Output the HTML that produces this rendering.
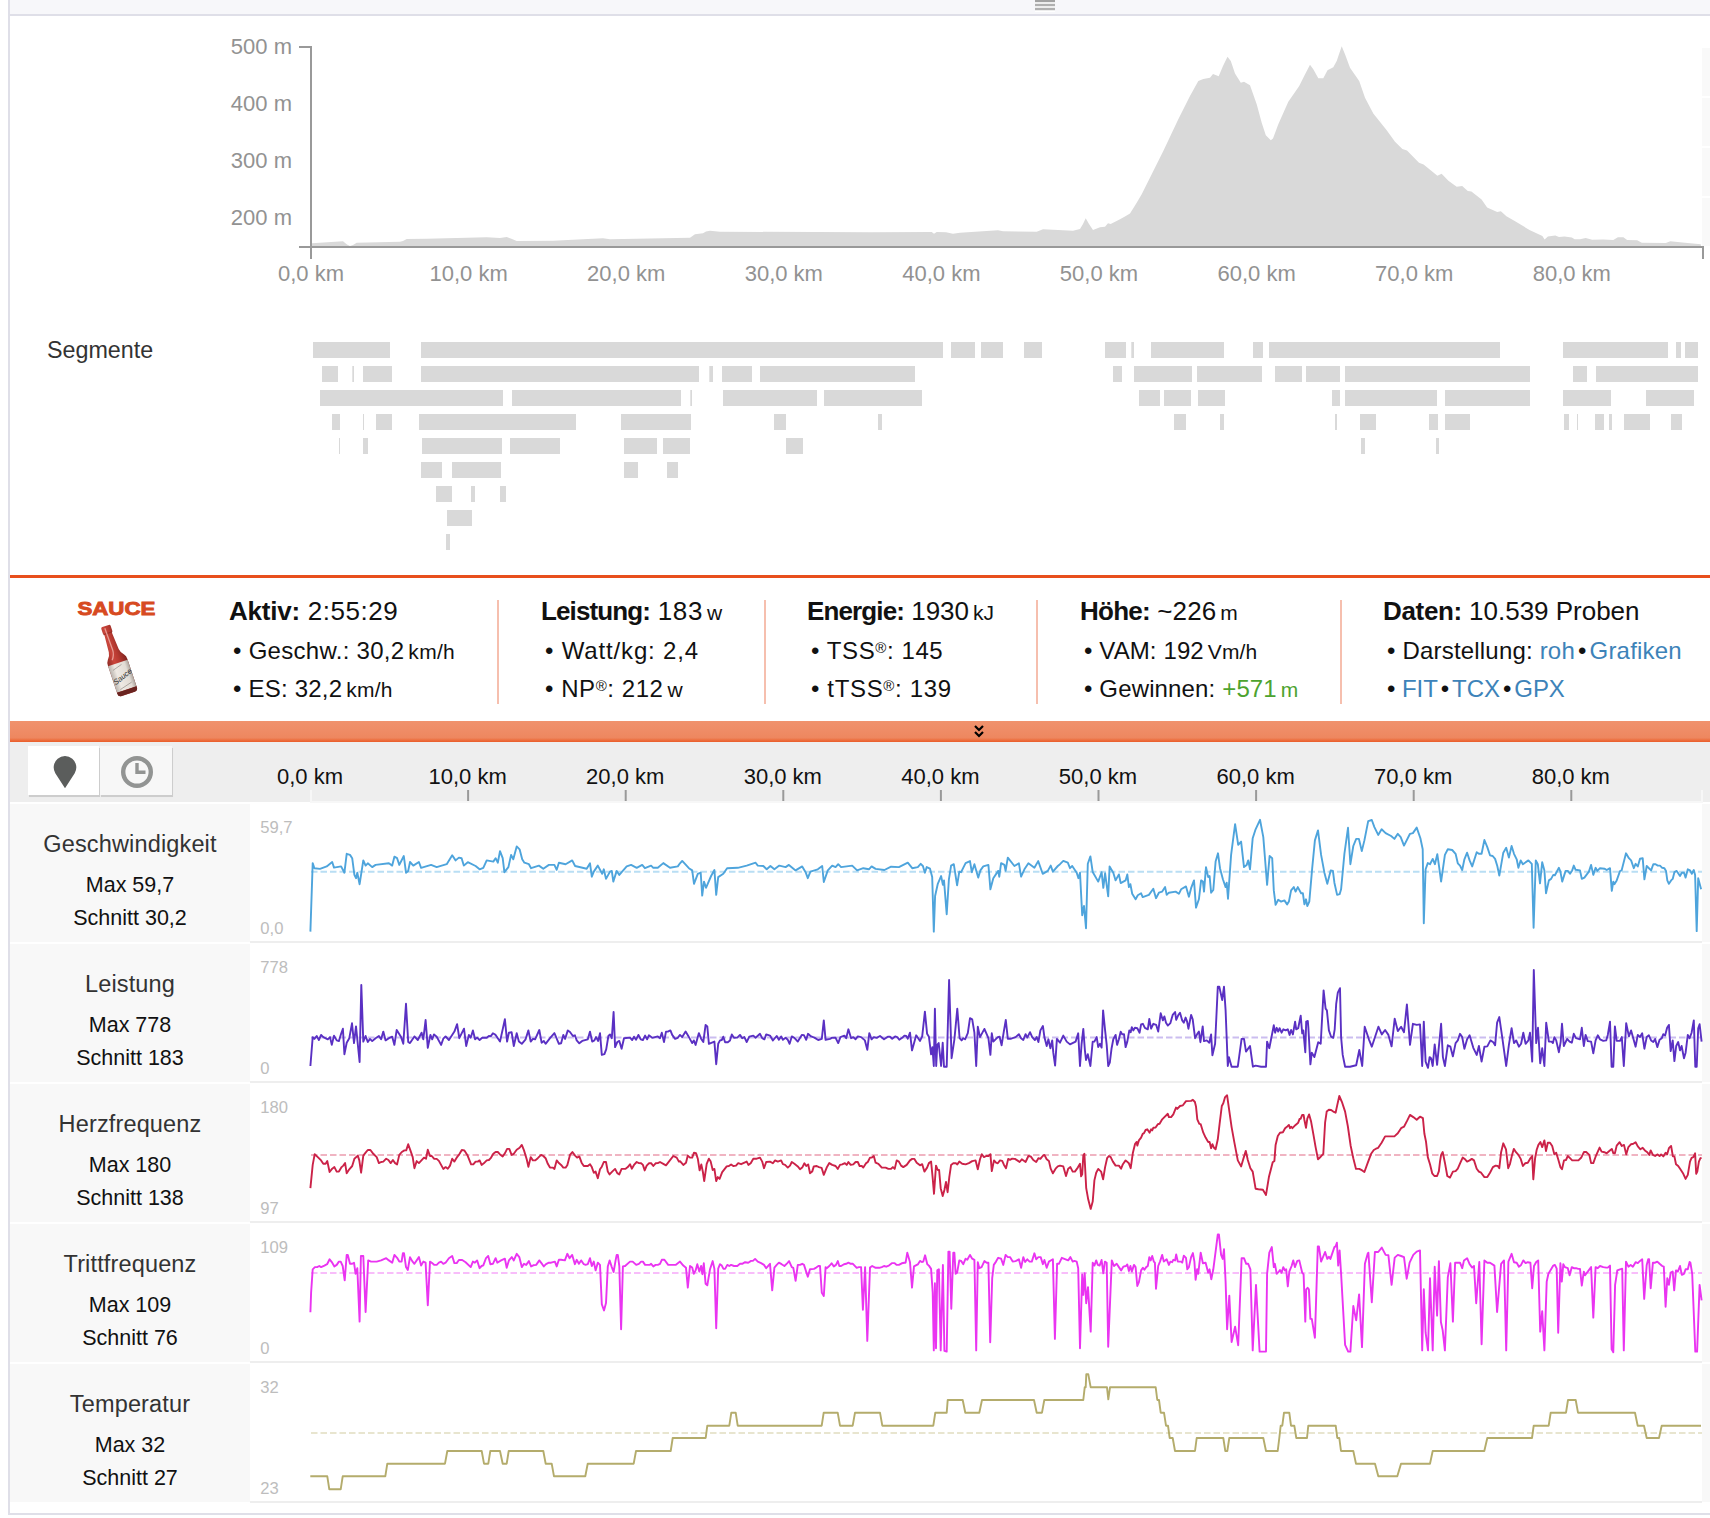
<!DOCTYPE html>
<html lang="de"><head><meta charset="utf-8"><title>Analyse</title>
<style>
html,body{margin:0;padding:0;background:#fff;}
body{width:1710px;height:1518px;position:relative;overflow:hidden;font-family:"Liberation Sans",sans-serif;color:#111;}
.abs{position:absolute;}
svg{position:absolute;left:0;top:0;overflow:visible;}
svg text{font-family:"Liberation Sans",sans-serif;}
.stat{position:absolute;white-space:nowrap;line-height:1;}
.stat b{font-weight:bold;}
.h{font-size:26px;}
.l{font-size:24px;}
.u{font-size:21px;margin-left:4px;}
.r{font-size:15px;position:relative;top:-6px;}
.a{color:#3d83b9;}
.g{color:#4da32f;}
.bul{font-size:24px;}
.sep{position:absolute;top:600px;width:2px;height:104px;background:#f6bfae;}
.lab{position:absolute;left:10px;width:240px;background:#f8f8f8;height:138px;text-align:center;}
.lab .t{position:absolute;left:0;width:240px;top:26px;font-size:23.5px;color:#333;line-height:28px;letter-spacing:0.15px;}
.lab .m{position:absolute;left:0;width:240px;top:68px;font-size:21.5px;color:#111;line-height:26px;}
.lab .s{position:absolute;left:0;width:240px;top:101px;font-size:21.5px;color:#111;line-height:26px;}
.cb{position:absolute;left:250px;width:1452px;height:2px;background:#eee;}
.rs{position:absolute;left:1702px;width:8px;background:#f8f8f8;}
.tab{position:absolute;top:746px;height:49px;box-shadow:1px 1.5px 0.5px #cdcdcd;}
</style></head><body>

<div class="abs" style="left:10px;top:0;width:1700px;height:14px;background:#f7f7fa"></div>
<div class="abs" style="left:10px;top:14px;width:1700px;height:2px;background:#dfdfe8"></div>
<div class="abs" style="left:8px;top:0;width:2px;height:1515px;background:#dfdfe8"></div>
<div class="abs" style="left:8px;top:1513px;width:1702px;height:2px;background:#dfdfe8"></div>
<div class="abs" style="left:1035px;top:0;width:20px;height:11px;background:#ededed"></div>
<div class="abs" style="left:1035px;top:0px;width:20px;height:2px;background:#a2a2a2"></div>
<div class="abs" style="left:1035px;top:4px;width:20px;height:2px;background:#b0b0b0"></div>
<div class="abs" style="left:1035px;top:8px;width:20px;height:2px;background:#b0b0b0"></div>
<div class="abs" style="left:1035px;top:11px;width:20px;height:1px;background:#fff"></div>
<div class="abs" style="left:1702px;top:48px;width:8px;height:48px;background:#f9f9f9"></div>
<div class="abs" style="left:1702px;top:98px;width:8px;height:48px;background:#f9f9f9"></div>
<div class="abs" style="left:1702px;top:148px;width:8px;height:48px;background:#f9f9f9"></div>
<div class="abs" style="left:1702px;top:198px;width:8px;height:48px;background:#f9f9f9"></div>
<svg width="1710" height="580" viewBox="0 0 1710 580">
<path d="M312,246 L312.0,243.3 L343.0,241.3 L347.0,244.5 L350.0,246.0 L353.0,245.0 L356.7,242.7 L400.0,241.7 L403.0,241.0 L406.7,239.0 L426.7,238.7 L486.7,237.3 L500.0,238.0 L506.7,237.0 L512.0,239.0 L516.7,241.0 L553.0,240.7 L603.0,238.3 L610.0,239.3 L690.0,237.7 L695.0,234.3 L703.0,233.3 L706.0,231.5 L710.0,230.7 L720.0,231.7 L870.0,232.3 L931.7,232.0 L934.0,233.7 L936.7,232.0 L946.0,232.3 L953.0,233.7 L960.0,232.7 L998.0,230.3 L1003.0,231.3 L1036.7,231.7 L1043.0,229.3 L1073.0,230.7 L1080.0,229.0 L1083.0,224.0 L1085.7,218.3 L1089.0,224.0 L1093.0,230.0 L1100.0,227.3 L1105.0,226.7 L1108.0,223.3 L1110.7,224.0 L1120.0,219.3 L1125.8,216.0 L1130.0,213.5 L1136.7,202.7 L1141.7,194.3 L1151.7,174.3 L1163.3,151.0 L1178.3,119.3 L1190.0,96.0 L1198.3,81.0 L1203.3,79.0 L1210.0,77.7 L1213.0,74.0 L1218.7,76.3 L1223.0,66.0 L1227.5,56.8 L1230.8,61.0 L1235.0,73.5 L1240.8,82.7 L1244.0,81.8 L1250.0,85.2 L1256.7,104.3 L1261.7,122.7 L1265.8,135.2 L1270.8,140.2 L1273.0,138.5 L1278.3,124.3 L1288.3,101.8 L1299.2,86.0 L1304.2,76.0 L1310.0,64.8 L1313.3,69.3 L1318.3,78.2 L1323.3,78.2 L1327.5,70.2 L1333.3,67.3 L1336.7,61.0 L1341.7,46.3 L1345.0,54.3 L1350.0,67.7 L1359.2,81.0 L1365.0,97.7 L1373.3,113.5 L1386.7,130.2 L1395.0,141.7 L1402.4,149.1 L1407.0,150.4 L1419.0,162.7 L1423.6,164.6 L1437.4,175.8 L1441.6,173.8 L1448.4,180.8 L1456.7,186.7 L1462.2,186.0 L1467.8,190.9 L1471.4,191.5 L1481.6,199.6 L1487.1,207.5 L1497.2,212.1 L1500.9,211.2 L1506.4,216.3 L1514.7,221.0 L1529.5,230.0 L1542.4,236.0 L1544.6,239.4 L1547.9,236.4 L1555.3,235.5 L1559.0,237.0 L1564.5,236.4 L1571.8,237.5 L1574.6,239.2 L1580.0,239.2 L1585.7,237.9 L1592.1,239.7 L1603.2,239.4 L1613.3,240.1 L1617.9,237.2 L1623.4,237.2 L1627.1,240.1 L1637.2,240.3 L1641.8,242.7 L1665.8,243.0 L1670.4,241.2 L1682.4,242.5 L1700.8,244.3 L1701,246 Z" fill="#d9d9d9"/>
<path d="M299,47 H311 V247" fill="none" stroke="#999" stroke-width="2"/>
<path d="M299,247 H1703 V259" fill="none" stroke="#999" stroke-width="2"/>
<path d="M311,247 V259" fill="none" stroke="#999" stroke-width="2"/>
<text x="292" y="54" text-anchor="end" font-size="22" fill="#929292">500 m</text>
<text x="292" y="111" text-anchor="end" font-size="22" fill="#929292">400 m</text>
<text x="292" y="168" text-anchor="end" font-size="22" fill="#929292">300 m</text>
<text x="292" y="225" text-anchor="end" font-size="22" fill="#929292">200 m</text>
<text x="311.0" y="280.5" text-anchor="middle" font-size="22" fill="#929292">0,0 km</text>
<text x="468.6" y="280.5" text-anchor="middle" font-size="22" fill="#929292">10,0 km</text>
<text x="626.2" y="280.5" text-anchor="middle" font-size="22" fill="#929292">20,0 km</text>
<text x="783.8" y="280.5" text-anchor="middle" font-size="22" fill="#929292">30,0 km</text>
<text x="941.4" y="280.5" text-anchor="middle" font-size="22" fill="#929292">40,0 km</text>
<text x="1099.0" y="280.5" text-anchor="middle" font-size="22" fill="#929292">50,0 km</text>
<text x="1256.6" y="280.5" text-anchor="middle" font-size="22" fill="#929292">60,0 km</text>
<text x="1414.2" y="280.5" text-anchor="middle" font-size="22" fill="#929292">70,0 km</text>
<text x="1571.8" y="280.5" text-anchor="middle" font-size="22" fill="#929292">80,0 km</text>
<text x="47" y="358" font-size="23.3" fill="#333">Segmente</text>
<rect x="313.0" y="342" width="77.0" height="16" fill="#d9d9d9"/>
<rect x="421.0" y="342" width="522.0" height="16" fill="#d9d9d9"/>
<rect x="951.0" y="342" width="24.0" height="16" fill="#d9d9d9"/>
<rect x="981.0" y="342" width="22.0" height="16" fill="#d9d9d9"/>
<rect x="1024.0" y="342" width="18.0" height="16" fill="#d9d9d9"/>
<rect x="1105.0" y="342" width="21.0" height="16" fill="#d9d9d9"/>
<rect x="1131.3" y="342" width="2.7" height="16" fill="#d9d9d9"/>
<rect x="1151.0" y="342" width="73.0" height="16" fill="#d9d9d9"/>
<rect x="1253.0" y="342" width="10.0" height="16" fill="#d9d9d9"/>
<rect x="1269.0" y="342" width="231.0" height="16" fill="#d9d9d9"/>
<rect x="1563.0" y="342" width="105.0" height="16" fill="#d9d9d9"/>
<rect x="1676.0" y="342" width="5.0" height="16" fill="#d9d9d9"/>
<rect x="1685.0" y="342" width="13.0" height="16" fill="#d9d9d9"/>
<rect x="322.0" y="366" width="16.0" height="16" fill="#d9d9d9"/>
<rect x="352.3" y="366" width="1.7" height="16" fill="#d9d9d9"/>
<rect x="363.0" y="366" width="29.0" height="16" fill="#d9d9d9"/>
<rect x="421.0" y="366" width="278.0" height="16" fill="#d9d9d9"/>
<rect x="709.3" y="366" width="3.7" height="16" fill="#d9d9d9"/>
<rect x="722.0" y="366" width="30.0" height="16" fill="#d9d9d9"/>
<rect x="760.0" y="366" width="155.0" height="16" fill="#d9d9d9"/>
<rect x="1113.0" y="366" width="9.0" height="16" fill="#d9d9d9"/>
<rect x="1134.0" y="366" width="58.0" height="16" fill="#d9d9d9"/>
<rect x="1197.0" y="366" width="65.0" height="16" fill="#d9d9d9"/>
<rect x="1275.0" y="366" width="27.0" height="16" fill="#d9d9d9"/>
<rect x="1306.0" y="366" width="34.0" height="16" fill="#d9d9d9"/>
<rect x="1345.0" y="366" width="185.0" height="16" fill="#d9d9d9"/>
<rect x="1573.0" y="366" width="14.0" height="16" fill="#d9d9d9"/>
<rect x="1596.0" y="366" width="102.0" height="16" fill="#d9d9d9"/>
<rect x="320.0" y="390" width="183.0" height="16" fill="#d9d9d9"/>
<rect x="512.0" y="390" width="169.0" height="16" fill="#d9d9d9"/>
<rect x="690.3" y="390" width="1.7" height="16" fill="#d9d9d9"/>
<rect x="723.0" y="390" width="94.0" height="16" fill="#d9d9d9"/>
<rect x="824.0" y="390" width="98.0" height="16" fill="#d9d9d9"/>
<rect x="1139.0" y="390" width="21.0" height="16" fill="#d9d9d9"/>
<rect x="1164.0" y="390" width="27.0" height="16" fill="#d9d9d9"/>
<rect x="1198.0" y="390" width="27.0" height="16" fill="#d9d9d9"/>
<rect x="1332.0" y="390" width="8.0" height="16" fill="#d9d9d9"/>
<rect x="1345.0" y="390" width="92.0" height="16" fill="#d9d9d9"/>
<rect x="1445.0" y="390" width="85.0" height="16" fill="#d9d9d9"/>
<rect x="1563.0" y="390" width="48.0" height="16" fill="#d9d9d9"/>
<rect x="1646.0" y="390" width="48.0" height="16" fill="#d9d9d9"/>
<rect x="332.0" y="414" width="8.0" height="16" fill="#d9d9d9"/>
<rect x="363.0" y="414" width="1.0" height="16" fill="#d9d9d9"/>
<rect x="376.0" y="414" width="16.0" height="16" fill="#d9d9d9"/>
<rect x="419.0" y="414" width="157.0" height="16" fill="#d9d9d9"/>
<rect x="621.0" y="414" width="70.0" height="16" fill="#d9d9d9"/>
<rect x="774.0" y="414" width="12.0" height="16" fill="#d9d9d9"/>
<rect x="878.0" y="414" width="4.0" height="16" fill="#d9d9d9"/>
<rect x="1174.0" y="414" width="12.0" height="16" fill="#d9d9d9"/>
<rect x="1220.0" y="414" width="4.0" height="16" fill="#d9d9d9"/>
<rect x="1335.0" y="414" width="2.0" height="16" fill="#d9d9d9"/>
<rect x="1360.0" y="414" width="16.0" height="16" fill="#d9d9d9"/>
<rect x="1429.0" y="414" width="9.0" height="16" fill="#d9d9d9"/>
<rect x="1445.0" y="414" width="25.0" height="16" fill="#d9d9d9"/>
<rect x="1564.0" y="414" width="5.0" height="16" fill="#d9d9d9"/>
<rect x="1577.0" y="414" width="1.0" height="16" fill="#d9d9d9"/>
<rect x="1595.0" y="414" width="9.0" height="16" fill="#d9d9d9"/>
<rect x="1609.0" y="414" width="3.0" height="16" fill="#d9d9d9"/>
<rect x="1624.0" y="414" width="26.0" height="16" fill="#d9d9d9"/>
<rect x="1671.0" y="414" width="11.0" height="16" fill="#d9d9d9"/>
<rect x="339.0" y="438" width="1.0" height="16" fill="#d9d9d9"/>
<rect x="363.0" y="438" width="5.0" height="16" fill="#d9d9d9"/>
<rect x="422.0" y="438" width="80.0" height="16" fill="#d9d9d9"/>
<rect x="510.0" y="438" width="50.0" height="16" fill="#d9d9d9"/>
<rect x="624.0" y="438" width="33.0" height="16" fill="#d9d9d9"/>
<rect x="663.0" y="438" width="27.0" height="16" fill="#d9d9d9"/>
<rect x="786.0" y="438" width="17.0" height="16" fill="#d9d9d9"/>
<rect x="1361.0" y="438" width="4.0" height="16" fill="#d9d9d9"/>
<rect x="1436.0" y="438" width="3.0" height="16" fill="#d9d9d9"/>
<rect x="421.0" y="462" width="21.0" height="16" fill="#d9d9d9"/>
<rect x="452.0" y="462" width="49.0" height="16" fill="#d9d9d9"/>
<rect x="624.0" y="462" width="14.0" height="16" fill="#d9d9d9"/>
<rect x="667.0" y="462" width="11.0" height="16" fill="#d9d9d9"/>
<rect x="436.0" y="486" width="16.0" height="16" fill="#d9d9d9"/>
<rect x="471.0" y="486" width="4.0" height="16" fill="#d9d9d9"/>
<rect x="500.0" y="486" width="6.0" height="16" fill="#d9d9d9"/>
<rect x="447.0" y="510" width="25.0" height="16" fill="#d9d9d9"/>
<rect x="446.0" y="534" width="4.0" height="16" fill="#d9d9d9"/>
</svg>
<div class="abs" style="left:10px;top:575px;width:1700px;height:3px;background:#e84f1c"></div>
<svg width="1710" height="720" viewBox="0 0 1710 720" style="top:0">
<text x="116.4" y="614.5" text-anchor="middle" font-size="18.8" font-weight="bold" fill="#d74a21" stroke="#d74a21" stroke-width="0.9" textLength="78" lengthAdjust="spacingAndGlyphs">SAUCE</text>
<g transform="translate(105.5,626) rotate(-18.5)">
<defs><linearGradient id="bg" x1="0" x2="1" y1="0" y2="0"><stop offset="0" stop-color="#8f2b25"/><stop offset="0.35" stop-color="#cb463c"/><stop offset="0.6" stop-color="#b83a31"/><stop offset="1" stop-color="#7f241f"/></linearGradient><linearGradient id="lg" x1="0" x2="1" y1="0" y2="0"><stop offset="0" stop-color="#b9b3ad"/><stop offset="0.3" stop-color="#efeae4"/><stop offset="0.8" stop-color="#e2dcd5"/><stop offset="1" stop-color="#aaa39c"/></linearGradient></defs>
<path d="M-4.9,1.5 Q-4.9,0 -3.4,0 H3.4 Q4.9,0 4.9,1.5 V6.5 Q4.9,7.5 4.2,7.8 L4,9 L5.2,26 Q5.6,30 8.6,33 Q10.3,35 10.3,38.5 V68 Q10.3,71.6 6.8,71.6 H-6.8 Q-10.3,71.6 -10.3,68 V38.5 Q-10.3,35 -8.6,33 Q-5.6,30 -5.2,26 L-4,9 L-4.2,7.8 Q-4.9,7.5 -4.9,6.5 Z" fill="url(#bg)"/>
<rect x="-10.3" y="39" width="20.6" height="28" fill="url(#lg)"/>
<path d="M-10.3,67 H10.3 V68 Q10.3,71.6 6.8,71.6 H-6.8 Q-10.3,71.6 -10.3,68 Z" fill="#6a2420"/>
<path d="M-4.6,7.6 H4.6" stroke="#7d2520" stroke-width="0.8" opacity=".7"/>
<path d="M-1.4,2 L-0.8,25 Q-0.8,30 -4.5,34.5" fill="none" stroke="#f3b8b0" stroke-width="1.3" opacity=".75"/>
<text x="0" y="56" text-anchor="middle" font-size="7.6" font-style="italic" font-family="Liberation Serif,serif" fill="#2a2a2a" transform="rotate(-20 0 53)">Sauce</text>
<path d="M-7,44.5 L3,41.5 M-6,65 L7,61.5" stroke="#8a8580" stroke-width="0.8" opacity=".7"/>
</g>
</svg>
<div class="stat h" style="left:229px;top:598px"><span id="h0b" style="letter-spacing:-0.208px;"><b>Aktiv:</b></span><span id="h0r" style="letter-spacing:0.539px;"> 2:55:29</span></div>
<div class="stat l" id="l01" style="left:233px;top:639px;letter-spacing:0.280px;">&#8226; Geschw.: 30,2<span class="u">km/h</span></div>
<div class="stat l" id="l02" style="left:233px;top:677px;letter-spacing:0.217px;">&#8226; ES: 32,2<span class="u">km/h</span></div>
<div class="stat h" style="left:541px;top:598px"><span id="h1b" style="letter-spacing:-0.889px;"><b>Leistung:</b></span><span id="h1r" style="letter-spacing:0.584px;"> 183<span class="u">w</span></span></div>
<div class="stat l" id="l11" style="left:545px;top:639px;letter-spacing:0.840px;">&#8226; Watt/kg: 2,4</div>
<div class="stat l" id="l12" style="left:545px;top:677px;letter-spacing:0.568px;">&#8226; NP<span class="r">&#174;</span>: 212<span class="u">w</span></div>
<div class="stat h" style="left:807px;top:598px"><span id="h2b" style="letter-spacing:-0.879px;"><b>Energie:</b></span><span id="h2r" style="letter-spacing:-0.011px;"> 1930<span class="u">kJ</span></span></div>
<div class="stat l" id="l21" style="left:811px;top:639px;letter-spacing:0.594px;">&#8226; TSS<span class="r">&#174;</span>: 145</div>
<div class="stat l" id="l22" style="left:811px;top:677px;letter-spacing:0.652px;">&#8226; tTSS<span class="r">&#174;</span>: 139</div>
<div class="stat h" style="left:1080px;top:598px"><span id="h3b" style="letter-spacing:-0.734px;"><b>H&#246;he:</b></span><span id="h3r" style="letter-spacing:0.101px;"> ~226<span class="u">m</span></span></div>
<div class="stat l" id="l31" style="left:1084px;top:639px;letter-spacing:0.114px;">&#8226; VAM: 192<span class="u">Vm/h</span></div>
<div class="stat l" id="l32" style="left:1084px;top:677px;letter-spacing:0.144px;">&#8226; Gewinnen: <span class="g">+571<span class="u">m</span></span></div>
<div class="stat h" style="left:1383px;top:598px"><span id="h4b" style="letter-spacing:-0.334px;"><b>Daten:</b></span><span id="h4r" style="letter-spacing:-0.015px;"> 10.539 Proben</span></div>
<div class="stat l" id="l41" style="left:1387px;top:639px;letter-spacing:0.192px;">&#8226; Darstellung: <span class="a">roh</span><span style="margin:0 3px">&#8226;</span><span class="a">Grafiken</span></div>
<div class="stat l" id="l42" style="left:1387px;top:677px;letter-spacing:-0.060px;">&#8226; <span class="a">FIT</span><span style="margin:0 3px">&#8226;</span><span class="a">TCX</span><span style="margin:0 3px">&#8226;</span><span class="a">GPX</span></div>
<div class="sep" style="left:497px"></div>
<div class="sep" style="left:764px"></div>
<div class="sep" style="left:1036px"></div>
<div class="sep" style="left:1340px"></div>
<div class="abs" style="left:10px;top:721px;width:1700px;height:21px;background:linear-gradient(#f0926d 0%,#ef8c66 45%,#ee875f 80%,#ec6c3c 92%,#ea5d2a 100%)"></div>
<svg width="1710" height="760" viewBox="0 0 1710 760"><path d="M975,726 L979,730 L983,726 M975,732 L979,736 L983,732" fill="none" stroke="#000" stroke-width="2.2"/></svg>
<div class="abs" style="left:10px;top:742px;width:1700px;height:60px;background:#eeeeee"></div>
<div class="tab" style="left:28px;width:71px;background:#fff"></div>
<div class="tab" style="left:100px;width:72px;background:#f7f7f7"></div>
<svg width="1710" height="810" viewBox="0 0 1710 810">
<path d="M65,788.3 L55.3,773.2 A11.3,11.3 0 1 1 74.7,773.2 Z" fill="#5b5d5c"/>
<circle cx="137" cy="772" r="13.8" fill="none" stroke="#929493" stroke-width="4.4"/>
<path d="M137,763 V772.3 H145.5" fill="none" stroke="#929493" stroke-width="3.4"/>
<path d="M311,790 V802 H1702 V790" fill="none" stroke="#f7f7f7" stroke-width="2"/>
<text x="310.0" y="783.5" text-anchor="middle" font-size="22" fill="#111">0,0 km</text>
<text x="467.6" y="783.5" text-anchor="middle" font-size="22" fill="#111">10,0 km</text>
<path d="M468.1,790 V801" stroke="#999" stroke-width="2"/>
<text x="625.2" y="783.5" text-anchor="middle" font-size="22" fill="#111">20,0 km</text>
<path d="M625.7,790 V801" stroke="#999" stroke-width="2"/>
<text x="782.8" y="783.5" text-anchor="middle" font-size="22" fill="#111">30,0 km</text>
<path d="M783.3,790 V801" stroke="#999" stroke-width="2"/>
<text x="940.4" y="783.5" text-anchor="middle" font-size="22" fill="#111">40,0 km</text>
<path d="M940.9,790 V801" stroke="#999" stroke-width="2"/>
<text x="1098.0" y="783.5" text-anchor="middle" font-size="22" fill="#111">50,0 km</text>
<path d="M1098.5,790 V801" stroke="#999" stroke-width="2"/>
<text x="1255.6" y="783.5" text-anchor="middle" font-size="22" fill="#111">60,0 km</text>
<path d="M1256.1,790 V801" stroke="#999" stroke-width="2"/>
<text x="1413.2" y="783.5" text-anchor="middle" font-size="22" fill="#111">70,0 km</text>
<path d="M1413.7,790 V801" stroke="#999" stroke-width="2"/>
<text x="1570.8" y="783.5" text-anchor="middle" font-size="22" fill="#111">80,0 km</text>
<path d="M1571.3,790 V801" stroke="#999" stroke-width="2"/>
</svg>
<div class="lab" style="top:804px"><div class="t">Geschwindigkeit</div><div class="m">Max 59,7</div><div class="s">Schnitt 30,2</div></div>
<div class="cb" style="top:941px"></div>
<div class="rs" style="top:804px;height:138px"></div>
<div class="lab" style="top:944px"><div class="t">Leistung</div><div class="m">Max 778</div><div class="s">Schnitt 183</div></div>
<div class="cb" style="top:1081px"></div>
<div class="rs" style="top:944px;height:138px"></div>
<div class="lab" style="top:1084px"><div class="t">Herzfrequenz</div><div class="m">Max 180</div><div class="s">Schnitt 138</div></div>
<div class="cb" style="top:1221px"></div>
<div class="rs" style="top:1084px;height:138px"></div>
<div class="lab" style="top:1224px"><div class="t">Trittfrequenz</div><div class="m">Max 109</div><div class="s">Schnitt 76</div></div>
<div class="cb" style="top:1361px"></div>
<div class="rs" style="top:1224px;height:138px"></div>
<div class="lab" style="top:1364px"><div class="t">Temperatur</div><div class="m">Max 32</div><div class="s">Schnitt 27</div></div>
<div class="cb" style="top:1501px"></div>
<div class="rs" style="top:1364px;height:138px"></div>
<svg width="1710" height="1518" viewBox="0 0 1710 1518">
<text x="260.3" y="833" font-size="16.6" fill="#bdbdbd">59,7</text>
<text x="260.3" y="934" font-size="16.6" fill="#bdbdbd">0,0</text>
<path d="M311,871.8 H1702" stroke="#b9def4" stroke-width="2" stroke-dasharray="6.5 3" fill="none"/>
<path d="M310.4,931.6 L312.7,863.1 L314.4,868.2 L320.0,868.9 L326.7,866.4 L332.2,862.0 L334.0,867.6 L341.1,866.4 L344.4,872.7 L346.7,853.8 L350.0,854.9 L352.2,858.2 L354.4,874.9 L356.0,878.2 L357.3,872.7 L359.6,884.2 L363.3,860.4 L365.6,865.6 L367.8,863.3 L372.2,867.1 L375.6,864.9 L388.9,863.3 L392.2,865.6 L394.4,856.7 L397.1,858.2 L399.3,864.9 L403.8,856.0 L406.0,872.7 L408.2,870.9 L410.0,862.0 L413.3,865.6 L418.9,862.0 L421.1,867.8 L431.1,864.9 L436.7,867.1 L446.7,864.2 L452.2,855.3 L455.6,860.4 L458.9,857.6 L461.6,858.2 L463.8,865.6 L467.8,862.2 L475.6,866.0 L479.6,869.3 L483.3,867.8 L486.7,860.4 L493.3,861.6 L495.6,858.2 L497.8,862.7 L500.0,851.1 L502.7,858.2 L504.4,872.2 L508.4,867.1 L511.1,854.9 L513.3,859.3 L516.7,846.4 L519.6,849.3 L522.2,859.3 L524.4,862.7 L528.9,864.2 L531.1,868.2 L538.9,865.6 L543.3,868.7 L548.9,864.9 L554.4,864.9 L556.7,869.8 L558.9,862.7 L565.6,864.2 L572.2,860.4 L575.1,866.0 L586.7,868.7 L590.0,863.3 L591.8,876.7 L593.8,871.6 L597.8,865.6 L602.2,873.8 L603.8,869.3 L606.0,878.9 L610.0,871.6 L611.8,870.9 L613.3,881.6 L616.7,870.9 L619.3,874.9 L626.7,866.4 L631.1,864.9 L636.7,867.8 L642.2,864.9 L644.9,868.2 L651.1,865.6 L653.3,867.8 L657.8,867.8 L663.3,863.1 L670.0,867.8 L677.8,866.4 L680.0,863.3 L682.2,860.9 L688.9,868.2 L692.2,870.4 L694.0,883.8 L697.8,873.8 L700.7,872.7 L702.2,895.6 L704.0,881.6 L706.0,887.8 L711.1,876.0 L714.4,870.0 L716.2,894.9 L718.2,877.1 L723.3,873.8 L727.1,868.2 L737.8,867.8 L746.7,865.6 L755.6,862.7 L757.8,865.6 L763.3,866.0 L766.7,869.3 L770.4,866.0 L774.4,869.3 L779.3,865.6 L785.6,867.1 L788.9,864.9 L795.6,870.4 L802.2,866.4 L805.6,872.2 L807.8,878.2 L810.4,871.6 L817.8,869.3 L822.2,866.0 L823.8,882.0 L827.8,870.4 L832.2,865.6 L835.6,867.1 L838.2,864.2 L841.1,867.1 L852.2,865.6 L857.1,870.4 L863.3,868.2 L868.9,869.3 L871.6,866.4 L875.6,868.9 L884.4,870.0 L891.1,866.7 L898.9,867.1 L907.8,862.7 L912.2,868.2 L917.8,867.1 L920.7,863.8 L922.9,866.0 L924.9,872.7 L926.7,867.1 L930.0,868.7 L932.2,877.1 L933.8,931.6 L935.1,896.0 L937.8,883.8 L941.1,876.0 L942.9,884.9 L944.0,880.4 L946.7,914.2 L948.9,879.3 L951.1,865.6 L953.8,864.2 L957.1,885.3 L959.3,871.6 L961.1,872.2 L965.6,863.1 L970.0,861.1 L971.8,872.2 L974.4,864.2 L978.2,877.6 L980.4,870.4 L983.3,866.4 L988.4,864.9 L990.4,889.3 L993.3,878.2 L998.2,870.9 L999.3,876.7 L1001.1,863.1 L1004.4,864.9 L1005.6,870.9 L1007.8,857.6 L1014.4,866.0 L1018.9,863.3 L1021.1,876.7 L1024.4,869.3 L1028.4,863.3 L1034.4,867.8 L1038.2,861.1 L1042.7,873.8 L1047.8,870.9 L1050.7,865.6 L1052.9,871.6 L1057.8,866.0 L1060.0,864.2 L1063.3,860.9 L1067.8,862.7 L1070.0,868.2 L1072.2,866.0 L1076.7,872.7 L1078.4,878.2 L1080.0,872.7 L1082.2,915.3 L1084.0,906.0 L1086.0,928.2 L1087.8,863.8 L1090.4,856.4 L1092.7,872.0 L1098.2,881.6 L1101.6,872.2 L1103.3,887.8 L1105.1,873.3 L1108.2,896.4 L1109.6,866.4 L1113.3,872.7 L1115.6,880.4 L1118.9,874.4 L1120.7,883.1 L1125.6,880.4 L1127.3,874.4 L1128.9,887.1 L1130.4,884.2 L1132.2,893.8 L1135.6,899.3 L1137.8,895.3 L1141.1,893.3 L1142.7,897.1 L1148.9,894.9 L1153.3,888.7 L1156.0,898.2 L1158.9,892.7 L1162.2,891.6 L1165.1,887.1 L1166.7,894.9 L1168.9,892.7 L1175.6,891.6 L1178.9,893.8 L1181.1,889.3 L1186.0,886.4 L1188.9,896.7 L1191.1,888.2 L1194.0,880.4 L1196.0,907.6 L1198.9,899.3 L1201.1,880.4 L1202.9,881.6 L1204.0,891.6 L1206.0,867.1 L1208.2,877.1 L1209.6,876.0 L1211.1,892.7 L1213.3,890.0 L1215.6,861.6 L1218.0,853.3 L1220.0,868.2 L1222.9,879.3 L1225.6,887.1 L1226.7,882.7 L1228.0,898.7 L1231.1,854.9 L1235.1,824.2 L1238.2,844.9 L1241.1,841.6 L1244.0,867.1 L1246.7,864.9 L1248.2,860.4 L1250.0,869.3 L1252.7,838.2 L1255.6,829.3 L1260.0,819.8 L1263.3,837.1 L1265.6,866.0 L1267.1,884.9 L1269.6,856.0 L1272.2,858.2 L1273.8,890.4 L1275.6,904.9 L1278.2,899.8 L1281.1,901.6 L1284.4,900.4 L1287.1,904.4 L1288.9,901.6 L1291.1,890.4 L1293.8,887.1 L1295.6,891.6 L1297.8,887.1 L1301.1,893.3 L1302.9,893.3 L1304.4,904.4 L1306.0,899.3 L1307.3,906.0 L1309.3,901.6 L1312.2,868.2 L1314.9,840.4 L1318.0,830.4 L1321.1,854.9 L1324.4,872.7 L1327.3,883.8 L1330.7,870.4 L1332.9,870.9 L1334.4,882.7 L1337.1,894.9 L1339.6,894.2 L1341.1,889.3 L1344.4,853.8 L1348.0,827.8 L1350.4,864.2 L1353.3,846.0 L1356.2,838.9 L1358.9,838.9 L1361.8,851.1 L1364.4,840.4 L1368.2,821.1 L1371.8,820.0 L1374.4,827.1 L1378.2,834.9 L1381.6,829.3 L1385.6,833.1 L1391.1,836.0 L1394.4,838.9 L1397.8,833.8 L1400.7,837.1 L1404.0,845.6 L1410.0,833.8 L1412.9,833.1 L1416.7,827.6 L1420.4,838.2 L1422.7,849.3 L1423.8,923.3 L1425.6,869.3 L1427.8,863.1 L1430.0,864.2 L1432.7,858.9 L1434.9,864.2 L1437.3,854.2 L1439.3,868.2 L1441.1,881.6 L1444.9,854.9 L1447.8,849.3 L1452.2,850.0 L1455.6,853.8 L1457.8,863.3 L1460.0,865.6 L1462.2,870.0 L1464.4,859.3 L1467.1,852.7 L1469.6,860.4 L1472.2,866.4 L1476.7,852.2 L1478.9,853.8 L1481.6,853.8 L1484.4,840.0 L1487.3,847.1 L1490.0,855.3 L1492.7,856.0 L1495.1,858.9 L1497.3,866.0 L1499.3,875.6 L1503.3,852.7 L1506.2,847.8 L1508.9,857.6 L1511.6,846.0 L1514.0,853.8 L1516.7,859.3 L1518.4,867.8 L1520.7,860.4 L1522.9,864.2 L1528.4,860.4 L1531.8,863.8 L1533.6,927.8 L1535.8,860.4 L1537.8,864.2 L1540.0,883.3 L1542.2,862.2 L1544.4,870.4 L1546.0,893.3 L1548.9,880.4 L1551.1,878.9 L1553.3,874.9 L1554.9,875.3 L1558.9,867.8 L1560.4,871.6 L1562.2,881.6 L1565.6,870.9 L1567.8,870.9 L1570.0,873.8 L1572.2,870.4 L1573.8,865.6 L1575.6,869.8 L1580.0,870.4 L1581.8,878.9 L1584.4,877.6 L1588.9,871.6 L1591.1,864.9 L1593.3,874.9 L1595.6,867.8 L1597.3,870.9 L1600.0,868.2 L1604.4,868.7 L1606.7,870.0 L1610.0,868.2 L1611.8,890.9 L1613.3,881.6 L1614.4,884.2 L1616.7,880.4 L1620.0,871.1 L1621.6,870.4 L1626.0,853.3 L1628.9,858.2 L1631.1,860.4 L1633.8,868.2 L1635.6,863.8 L1637.8,866.4 L1640.0,858.7 L1642.7,858.2 L1644.4,879.3 L1646.7,866.0 L1651.1,870.4 L1653.3,864.2 L1655.6,864.2 L1657.8,865.6 L1660.0,865.6 L1662.2,867.8 L1664.4,868.2 L1666.0,870.9 L1667.3,880.4 L1668.9,883.8 L1671.1,880.4 L1672.7,878.9 L1674.4,872.2 L1676.7,870.9 L1680.0,876.0 L1681.8,872.7 L1684.0,872.7 L1685.6,877.6 L1687.8,869.3 L1690.0,870.4 L1691.8,873.8 L1693.8,870.0 L1695.1,874.9 L1696.7,931.1 L1698.2,878.2 L1701.1,889.3" fill="none" stroke="#4ea4dc" stroke-width="1.9" stroke-linejoin="round"/>
<text x="260.3" y="973" font-size="16.6" fill="#bdbdbd">778</text>
<text x="260.3" y="1074" font-size="16.6" fill="#bdbdbd">0</text>
<path d="M311,1037.6 H1702" stroke="#cbbdf0" stroke-width="2" stroke-dasharray="6.5 3" fill="none"/>
<path d="M310.4,1066.0 L312.7,1037.1 L314.4,1038.9 L316.7,1036.0 L318.9,1040.0 L321.1,1034.9 L323.3,1037.1 L327.8,1039.3 L330.0,1037.1 L331.8,1044.9 L334.0,1035.6 L336.7,1040.4 L338.9,1041.1 L341.1,1033.8 L342.9,1028.7 L344.4,1054.2 L346.7,1042.7 L349.3,1038.2 L352.0,1023.3 L354.0,1043.1 L356.0,1026.4 L359.6,1062.0 L361.3,984.9 L363.3,1041.6 L365.6,1036.0 L367.8,1042.0 L370.0,1038.9 L372.2,1041.1 L375.6,1038.2 L378.9,1036.0 L381.1,1039.3 L383.3,1031.6 L385.6,1040.4 L388.9,1038.2 L392.2,1036.7 L394.4,1044.9 L396.7,1030.0 L401.1,1037.1 L403.3,1043.8 L406.0,1003.8 L408.2,1042.0 L410.0,1043.1 L414.4,1036.4 L417.8,1040.0 L421.6,1032.7 L423.3,1039.3 L425.6,1020.0 L427.8,1047.8 L430.4,1034.9 L432.2,1039.3 L434.0,1034.4 L436.7,1036.7 L441.1,1044.9 L443.3,1038.7 L445.6,1036.4 L448.9,1040.0 L454.4,1031.6 L457.1,1024.2 L459.3,1038.2 L464.0,1028.7 L466.2,1046.0 L468.9,1034.9 L470.7,1037.8 L472.9,1030.4 L475.1,1039.3 L477.1,1037.6 L479.6,1040.0 L482.2,1037.8 L486.7,1037.8 L488.9,1036.0 L490.7,1036.4 L492.9,1033.3 L495.6,1034.9 L500.0,1041.6 L504.9,1019.3 L507.1,1041.6 L508.9,1032.7 L511.6,1032.2 L513.8,1046.0 L516.7,1033.3 L518.9,1041.6 L521.8,1043.8 L525.6,1039.3 L528.4,1030.4 L530.7,1041.6 L532.9,1038.9 L535.1,1039.3 L539.3,1030.0 L541.6,1042.7 L543.8,1040.9 L545.6,1043.8 L550.0,1038.2 L554.4,1033.1 L558.9,1043.8 L561.1,1043.3 L563.3,1034.9 L565.1,1038.9 L567.8,1030.4 L570.0,1032.0 L572.9,1036.0 L574.9,1035.3 L576.7,1040.4 L579.3,1043.3 L582.2,1040.9 L587.8,1039.3 L590.0,1031.6 L592.2,1041.6 L594.4,1040.4 L596.0,1037.1 L598.2,1040.9 L600.0,1033.1 L601.8,1054.9 L604.4,1054.2 L606.2,1049.3 L608.4,1036.0 L610.0,1034.4 L611.8,1038.2 L613.6,1012.0 L615.1,1047.1 L617.3,1042.0 L619.3,1040.9 L621.6,1048.7 L624.0,1038.2 L630.0,1037.6 L632.2,1040.0 L634.0,1036.7 L636.0,1039.8 L638.4,1034.9 L640.7,1039.3 L642.9,1040.0 L645.1,1035.6 L647.1,1039.3 L648.9,1035.3 L652.2,1037.8 L657.8,1036.4 L660.0,1038.2 L661.8,1032.7 L664.0,1042.0 L666.0,1031.6 L667.8,1031.6 L670.4,1030.4 L672.2,1034.9 L675.1,1038.9 L677.8,1037.8 L680.0,1034.9 L682.2,1037.1 L685.6,1031.6 L688.9,1037.1 L692.2,1043.1 L693.8,1040.4 L695.6,1044.9 L698.9,1033.1 L701.1,1038.7 L703.3,1042.0 L705.6,1024.9 L707.3,1026.4 L708.9,1043.8 L714.4,1041.6 L716.2,1064.2 L718.2,1043.8 L720.0,1040.4 L721.8,1040.0 L723.3,1036.7 L725.1,1042.2 L727.8,1042.2 L730.0,1040.4 L731.8,1034.4 L734.0,1037.8 L737.3,1037.6 L740.0,1034.9 L742.2,1038.2 L744.4,1037.1 L746.7,1042.0 L749.3,1036.7 L753.3,1035.6 L755.6,1037.8 L760.0,1033.8 L762.2,1038.2 L764.4,1039.3 L766.2,1034.4 L770.0,1035.6 L772.9,1040.4 L776.7,1036.0 L778.9,1039.8 L781.1,1036.4 L782.9,1039.8 L785.6,1037.8 L787.8,1039.8 L789.6,1043.8 L791.8,1036.4 L794.4,1037.8 L797.8,1041.6 L801.8,1034.9 L804.0,1035.3 L806.2,1039.8 L808.0,1033.8 L811.1,1036.4 L814.4,1037.6 L818.2,1040.0 L821.8,1038.9 L823.8,1020.4 L825.6,1039.8 L830.0,1038.9 L832.2,1037.6 L835.6,1037.8 L838.2,1043.1 L840.4,1037.1 L844.4,1035.6 L846.2,1038.2 L848.4,1029.3 L851.1,1038.2 L853.3,1037.1 L855.6,1039.3 L857.8,1036.4 L861.1,1037.1 L864.9,1040.4 L867.3,1049.8 L869.3,1033.1 L871.6,1039.3 L873.8,1037.1 L876.7,1037.8 L880.0,1036.0 L884.0,1039.3 L887.8,1036.7 L890.0,1036.7 L892.2,1038.7 L895.1,1036.4 L897.3,1037.1 L899.3,1039.8 L902.2,1037.8 L904.4,1035.6 L906.2,1036.0 L907.8,1038.7 L910.0,1032.7 L912.0,1050.4 L916.2,1035.3 L920.0,1040.9 L922.2,1036.4 L924.9,1011.6 L927.1,1033.8 L928.9,1036.7 L931.1,1054.4 L932.4,1047.1 L933.8,1066.0 L934.9,1008.7 L936.2,1066.0 L937.3,1044.9 L938.7,1043.1 L941.1,1066.0 L942.7,1042.7 L944.0,1066.7 L946.7,1066.7 L949.1,980.0 L951.6,1058.2 L954.4,1039.3 L957.3,1008.7 L959.6,1038.2 L961.6,1040.4 L963.3,1038.2 L965.1,1039.3 L967.8,1033.1 L970.0,1018.2 L972.2,1019.3 L974.4,1032.7 L976.2,1066.0 L977.8,1026.7 L980.0,1037.1 L984.4,1028.9 L988.4,1038.2 L990.4,1054.9 L991.8,1033.3 L993.3,1041.6 L997.8,1037.1 L999.6,1036.7 L1001.6,1045.3 L1003.8,1031.6 L1005.8,1020.0 L1007.8,1038.7 L1011.1,1038.7 L1015.6,1037.1 L1018.9,1034.2 L1021.1,1038.2 L1023.3,1040.0 L1025.6,1034.2 L1027.3,1037.6 L1030.0,1032.2 L1032.2,1037.1 L1034.9,1040.0 L1036.7,1037.1 L1038.4,1042.0 L1040.4,1030.4 L1042.9,1026.0 L1044.4,1037.1 L1046.7,1046.0 L1048.4,1039.3 L1050.4,1048.2 L1052.2,1040.4 L1053.3,1052.7 L1055.1,1065.6 L1056.9,1038.9 L1060.0,1042.7 L1063.3,1035.6 L1066.7,1041.6 L1070.0,1044.4 L1075.6,1041.6 L1078.2,1033.3 L1080.0,1066.0 L1081.6,1043.8 L1083.3,1028.9 L1084.9,1050.4 L1086.0,1060.0 L1087.8,1054.2 L1090.4,1066.0 L1092.7,1041.6 L1094.4,1041.6 L1096.7,1037.1 L1098.2,1047.1 L1100.0,1043.8 L1101.6,1047.6 L1103.1,1010.4 L1105.1,1030.4 L1106.7,1044.9 L1108.2,1066.0 L1109.8,1062.7 L1111.6,1048.2 L1113.3,1039.3 L1115.6,1034.9 L1117.1,1044.9 L1118.9,1039.3 L1120.7,1031.6 L1122.2,1034.4 L1124.0,1034.2 L1125.6,1047.1 L1127.3,1041.6 L1129.3,1030.4 L1130.7,1032.2 L1131.8,1027.1 L1133.3,1030.4 L1134.9,1027.8 L1137.3,1028.2 L1139.6,1032.7 L1141.1,1024.4 L1142.9,1023.8 L1144.9,1027.8 L1147.8,1029.3 L1149.3,1018.9 L1151.1,1028.7 L1153.3,1023.8 L1156.2,1024.9 L1158.2,1031.6 L1160.7,1013.3 L1162.9,1020.4 L1164.4,1016.4 L1166.0,1022.7 L1167.8,1025.6 L1170.4,1023.1 L1172.7,1014.9 L1175.1,1012.0 L1176.2,1019.8 L1178.2,1015.3 L1180.0,1012.7 L1182.2,1020.4 L1183.8,1022.7 L1185.6,1017.6 L1187.1,1021.6 L1188.4,1028.7 L1191.1,1014.9 L1192.7,1019.3 L1195.1,1038.2 L1197.3,1033.8 L1198.9,1031.6 L1200.4,1042.2 L1202.7,1026.4 L1204.0,1041.1 L1206.7,1040.4 L1209.3,1042.7 L1211.1,1034.4 L1212.4,1055.3 L1215.1,1043.8 L1217.8,986.7 L1219.3,986.7 L1222.2,1000.0 L1224.0,986.7 L1225.6,1010.4 L1227.8,1066.0 L1228.9,1057.1 L1231.6,1066.7 L1237.8,1066.7 L1241.6,1038.9 L1244.0,1038.9 L1246.0,1051.6 L1250.0,1046.0 L1252.9,1066.7 L1255.6,1065.6 L1261.1,1066.7 L1266.0,1066.7 L1267.1,1041.6 L1269.3,1048.2 L1273.8,1025.3 L1275.1,1032.7 L1276.7,1027.8 L1278.2,1031.6 L1279.6,1028.2 L1281.6,1032.7 L1283.3,1029.3 L1285.6,1030.4 L1287.8,1029.3 L1289.6,1034.9 L1291.1,1030.0 L1292.9,1034.4 L1295.1,1021.6 L1296.2,1029.3 L1298.2,1028.2 L1300.7,1015.6 L1302.2,1033.3 L1303.3,1030.4 L1305.3,1052.2 L1306.2,1021.6 L1307.8,1020.9 L1308.4,1028.2 L1310.4,1064.4 L1311.8,1052.7 L1314.4,1057.1 L1318.2,1042.2 L1320.7,1043.8 L1323.6,990.4 L1325.6,1008.7 L1326.9,1010.4 L1328.9,1030.4 L1331.1,1036.7 L1333.3,1037.8 L1334.7,1029.3 L1336.2,1003.8 L1337.8,992.7 L1340.0,988.2 L1341.1,1037.1 L1342.7,1054.9 L1345.1,1066.7 L1350.0,1066.7 L1356.2,1065.3 L1359.3,1050.0 L1362.2,1066.0 L1364.7,1026.7 L1368.9,1039.3 L1371.8,1046.7 L1378.4,1026.7 L1381.8,1034.4 L1385.1,1030.0 L1388.4,1034.9 L1391.6,1046.4 L1394.7,1018.7 L1397.8,1031.1 L1401.1,1026.7 L1404.0,1032.2 L1406.9,1004.4 L1410.0,1044.9 L1412.9,1023.8 L1416.7,1024.9 L1420.0,1024.4 L1422.2,1066.0 L1423.8,1021.6 L1425.6,1061.6 L1428.0,1067.8 L1429.6,1057.1 L1431.1,1058.2 L1432.7,1066.0 L1434.7,1044.4 L1437.1,1064.9 L1441.1,1023.8 L1442.9,1057.1 L1444.9,1066.0 L1447.8,1045.3 L1450.4,1046.7 L1452.9,1056.4 L1455.6,1043.1 L1457.8,1040.4 L1460.0,1033.8 L1462.2,1037.1 L1464.4,1048.7 L1467.1,1039.3 L1469.6,1035.3 L1473.3,1047.8 L1476.7,1054.9 L1478.9,1046.0 L1481.6,1061.6 L1484.4,1046.7 L1487.3,1046.4 L1490.4,1040.4 L1493.3,1042.2 L1495.1,1045.3 L1497.1,1022.7 L1499.3,1017.1 L1502.2,1037.1 L1506.2,1066.0 L1508.9,1044.9 L1511.6,1028.2 L1514.0,1043.1 L1516.2,1040.4 L1518.9,1046.7 L1521.1,1043.8 L1523.3,1032.7 L1525.6,1043.8 L1528.4,1040.4 L1530.0,1032.7 L1532.2,1061.6 L1533.8,970.0 L1536.2,1043.1 L1538.0,1027.8 L1540.2,1063.3 L1542.2,1048.2 L1544.4,1066.0 L1546.2,1022.7 L1548.9,1041.6 L1551.6,1041.6 L1552.9,1043.1 L1554.4,1037.1 L1556.2,1040.4 L1558.9,1052.2 L1560.7,1041.6 L1562.0,1023.8 L1563.8,1046.0 L1567.1,1038.9 L1569.6,1041.6 L1571.8,1042.7 L1573.8,1033.8 L1576.0,1038.2 L1580.0,1039.3 L1581.8,1027.8 L1583.8,1046.0 L1585.6,1034.9 L1587.8,1041.1 L1591.1,1041.6 L1593.3,1053.3 L1595.6,1040.4 L1597.8,1035.3 L1600.0,1039.3 L1603.3,1040.9 L1606.2,1040.4 L1607.8,1034.9 L1610.0,1021.6 L1611.6,1066.7 L1613.3,1066.7 L1614.9,1026.4 L1616.7,1040.9 L1620.0,1040.9 L1621.8,1037.1 L1623.8,1066.0 L1626.2,1023.1 L1628.9,1036.4 L1631.1,1030.4 L1635.6,1046.7 L1637.8,1034.9 L1640.0,1037.1 L1642.2,1033.3 L1644.4,1048.7 L1646.7,1037.1 L1648.9,1035.3 L1651.1,1040.4 L1653.3,1042.0 L1655.1,1038.9 L1657.3,1047.1 L1659.6,1039.8 L1661.8,1038.2 L1663.3,1034.2 L1665.1,1035.6 L1667.1,1027.8 L1668.9,1024.9 L1670.7,1051.1 L1672.7,1040.4 L1674.4,1061.1 L1676.2,1046.0 L1678.2,1042.0 L1680.0,1050.4 L1681.6,1046.0 L1684.0,1058.2 L1685.6,1052.7 L1687.8,1034.9 L1689.6,1038.2 L1691.6,1032.7 L1693.8,1020.4 L1695.3,1066.7 L1696.7,1066.7 L1698.2,1028.2 L1699.6,1024.2 L1701.6,1041.6" fill="none" stroke="#5a30c3" stroke-width="1.9" stroke-linejoin="round"/>
<text x="260.3" y="1113" font-size="16.6" fill="#bdbdbd">180</text>
<text x="260.3" y="1214" font-size="16.6" fill="#bdbdbd">97</text>
<path d="M311,1154.9 H1702" stroke="#f0b4c2" stroke-width="2" stroke-dasharray="6.5 3" fill="none"/>
<path d="M310.4,1188.2 L312.7,1164.9 L314.7,1154.2 L317.8,1157.1 L321.1,1160.4 L323.3,1163.8 L325.6,1163.8 L327.3,1161.1 L329.6,1172.0 L332.2,1168.7 L334.4,1167.1 L336.7,1171.6 L338.9,1171.6 L341.6,1167.1 L343.3,1165.6 L345.1,1163.1 L346.7,1173.3 L349.3,1169.3 L352.2,1166.0 L354.4,1158.7 L357.8,1155.6 L359.3,1160.4 L361.1,1172.7 L363.3,1155.6 L365.6,1152.7 L367.8,1150.0 L370.4,1150.0 L373.3,1153.8 L376.7,1157.1 L378.9,1163.1 L381.1,1162.0 L383.3,1161.6 L386.2,1158.7 L388.4,1160.0 L390.7,1163.1 L392.9,1160.0 L395.1,1163.1 L397.1,1164.4 L399.3,1154.9 L401.8,1152.0 L404.4,1150.4 L406.2,1150.4 L408.2,1144.2 L410.4,1150.4 L412.7,1157.1 L414.4,1168.2 L416.7,1161.1 L418.9,1163.1 L424.0,1157.6 L426.0,1158.7 L427.8,1149.8 L430.0,1156.0 L431.8,1156.0 L434.0,1158.7 L436.7,1158.9 L438.9,1160.9 L443.3,1168.9 L445.6,1167.1 L447.8,1168.7 L450.0,1165.6 L452.2,1158.7 L454.4,1161.6 L457.1,1157.1 L459.6,1153.8 L461.8,1150.0 L464.4,1150.4 L467.3,1154.9 L471.1,1164.4 L473.3,1164.4 L475.6,1161.6 L477.8,1161.6 L479.6,1160.4 L481.6,1164.9 L483.8,1163.3 L486.7,1160.4 L488.9,1160.0 L490.7,1158.2 L493.3,1153.8 L495.6,1152.0 L497.8,1152.0 L500.0,1154.4 L502.7,1156.4 L504.9,1153.3 L507.1,1148.9 L509.3,1148.9 L511.6,1154.9 L513.8,1153.8 L516.7,1149.8 L519.6,1147.8 L521.8,1144.9 L524.0,1150.4 L526.7,1159.3 L528.4,1166.7 L530.7,1157.1 L532.9,1160.4 L535.1,1160.4 L537.8,1158.2 L541.1,1154.9 L543.3,1156.0 L545.6,1158.2 L547.8,1163.8 L550.0,1167.6 L552.7,1167.6 L554.4,1168.9 L556.7,1160.4 L558.9,1163.1 L561.1,1164.9 L563.3,1167.6 L565.6,1167.6 L567.3,1165.3 L570.0,1154.9 L572.4,1152.0 L575.1,1155.6 L577.1,1157.6 L579.3,1156.4 L581.6,1162.7 L583.8,1166.0 L587.8,1166.0 L590.0,1164.2 L591.8,1167.1 L593.8,1172.7 L595.6,1171.6 L597.8,1178.2 L600.0,1169.3 L601.8,1166.7 L603.8,1162.0 L606.0,1162.0 L607.8,1171.6 L609.6,1174.4 L612.2,1171.6 L615.1,1168.9 L617.3,1173.1 L619.3,1174.4 L621.6,1168.9 L625.6,1168.7 L627.8,1167.1 L630.0,1164.2 L631.8,1168.7 L634.0,1164.9 L636.7,1162.0 L638.9,1163.1 L641.1,1163.3 L642.9,1164.9 L644.7,1170.4 L646.7,1165.6 L648.9,1163.3 L651.1,1163.1 L653.3,1166.0 L655.6,1163.3 L657.8,1163.1 L660.0,1162.0 L663.3,1163.8 L666.0,1165.3 L668.9,1161.6 L673.3,1156.0 L676.7,1157.6 L678.9,1161.6 L680.0,1161.1 L683.3,1164.9 L686.0,1162.7 L687.8,1155.6 L690.0,1157.6 L692.2,1157.6 L694.0,1152.7 L696.0,1153.1 L697.8,1158.7 L699.6,1170.4 L701.3,1164.4 L702.9,1172.0 L704.2,1181.1 L706.7,1163.8 L708.9,1158.7 L710.7,1161.6 L712.7,1170.0 L714.4,1168.9 L716.2,1181.1 L717.8,1177.1 L719.6,1178.9 L722.2,1172.2 L726.7,1166.4 L728.9,1166.0 L731.1,1164.4 L733.3,1166.0 L736.0,1165.6 L738.2,1163.1 L741.1,1164.2 L746.7,1161.6 L748.4,1164.9 L750.7,1163.3 L753.3,1158.7 L756.7,1158.7 L760.0,1157.6 L762.2,1161.6 L764.0,1168.2 L766.2,1162.0 L770.0,1161.6 L772.9,1163.3 L775.1,1160.4 L777.8,1161.6 L781.1,1160.4 L782.9,1164.2 L785.1,1164.9 L787.8,1167.6 L790.0,1165.6 L791.8,1162.0 L794.4,1163.8 L797.8,1166.4 L800.0,1169.3 L802.2,1167.6 L804.4,1163.3 L806.2,1166.0 L808.2,1164.4 L810.0,1173.3 L812.2,1171.6 L813.8,1166.4 L816.7,1166.0 L818.9,1167.1 L821.6,1167.8 L823.8,1174.9 L826.7,1167.6 L829.3,1163.1 L832.2,1164.9 L835.6,1166.0 L837.8,1168.9 L840.0,1164.9 L842.2,1164.4 L844.9,1163.1 L846.7,1164.9 L848.4,1162.0 L850.7,1164.9 L853.3,1164.4 L855.6,1162.0 L857.8,1162.0 L859.6,1166.0 L861.8,1166.0 L863.3,1167.6 L866.2,1163.1 L867.8,1162.0 L870.0,1157.6 L871.8,1157.6 L873.8,1156.0 L875.6,1162.7 L878.4,1163.8 L881.8,1167.6 L885.6,1167.6 L888.4,1168.9 L891.1,1168.7 L892.9,1167.1 L894.7,1168.9 L896.7,1160.4 L898.9,1161.6 L901.1,1165.6 L903.3,1167.1 L906.7,1164.9 L910.0,1160.4 L912.2,1158.9 L914.4,1158.9 L916.7,1162.7 L920.0,1165.3 L922.2,1164.2 L924.4,1171.6 L927.1,1167.6 L928.9,1163.1 L931.1,1161.6 L932.7,1178.2 L934.0,1193.8 L936.0,1165.6 L937.8,1170.0 L939.1,1170.0 L940.7,1188.2 L942.7,1196.0 L944.4,1190.0 L946.0,1182.0 L947.6,1192.2 L949.3,1177.1 L951.1,1164.9 L953.3,1163.3 L955.6,1163.1 L957.3,1164.4 L959.3,1161.6 L962.2,1163.8 L965.6,1164.4 L968.9,1163.1 L972.2,1161.1 L975.6,1160.4 L977.8,1169.3 L980.0,1159.3 L981.8,1154.2 L984.0,1157.1 L986.2,1156.0 L988.4,1156.0 L990.4,1154.2 L991.8,1171.1 L994.0,1160.4 L996.0,1162.7 L997.8,1163.3 L1000.0,1160.4 L1002.2,1160.9 L1004.0,1164.9 L1006.0,1168.2 L1008.2,1158.9 L1010.0,1159.8 L1012.2,1158.7 L1014.9,1158.9 L1017.3,1160.4 L1019.6,1162.0 L1021.8,1159.3 L1025.6,1162.0 L1028.4,1156.0 L1030.7,1156.4 L1033.3,1160.0 L1036.2,1162.0 L1038.4,1158.2 L1040.4,1158.9 L1042.7,1156.0 L1044.4,1154.9 L1046.7,1159.3 L1048.9,1160.9 L1050.7,1168.7 L1052.9,1173.3 L1055.6,1168.7 L1057.8,1166.4 L1060.0,1165.6 L1063.3,1166.4 L1066.0,1176.0 L1068.2,1168.7 L1070.4,1167.1 L1072.7,1171.6 L1074.9,1171.6 L1077.8,1167.6 L1080.0,1163.8 L1081.1,1176.4 L1082.2,1174.4 L1083.3,1155.6 L1084.4,1153.8 L1086.2,1188.2 L1088.2,1199.3 L1090.7,1208.9 L1092.7,1201.6 L1094.4,1180.4 L1096.2,1172.7 L1098.2,1168.9 L1101.1,1171.6 L1103.1,1179.3 L1105.1,1167.1 L1107.1,1158.2 L1108.9,1156.0 L1110.7,1157.1 L1112.9,1161.6 L1115.6,1165.6 L1118.9,1165.6 L1121.1,1168.7 L1122.9,1164.2 L1125.6,1160.4 L1128.9,1163.3 L1130.7,1168.2 L1132.9,1152.7 L1135.1,1143.8 L1136.7,1142.0 L1137.3,1145.6 L1138.9,1140.4 L1141.1,1137.6 L1142.7,1133.8 L1144.0,1133.1 L1145.6,1130.0 L1147.3,1129.3 L1149.6,1132.7 L1151.1,1129.3 L1152.2,1130.4 L1153.3,1127.8 L1155.6,1127.6 L1157.8,1124.2 L1159.6,1123.8 L1162.2,1119.3 L1164.4,1117.1 L1167.8,1113.8 L1168.9,1117.1 L1171.1,1117.1 L1173.3,1114.4 L1176.0,1107.6 L1177.3,1108.9 L1180.0,1106.0 L1182.9,1105.3 L1186.0,1101.1 L1191.1,1100.9 L1192.9,1099.8 L1194.9,1102.0 L1196.0,1106.4 L1197.3,1119.3 L1199.3,1123.8 L1200.7,1124.2 L1203.3,1132.7 L1205.6,1137.6 L1208.2,1142.0 L1209.6,1142.0 L1211.1,1148.2 L1212.4,1144.2 L1214.0,1147.8 L1215.6,1149.3 L1217.8,1139.3 L1219.6,1123.8 L1221.8,1106.0 L1223.3,1103.3 L1225.1,1097.1 L1227.1,1095.3 L1228.9,1108.2 L1231.6,1127.1 L1234.4,1142.7 L1237.8,1160.4 L1241.1,1166.4 L1243.3,1158.9 L1245.8,1150.9 L1247.8,1160.0 L1250.4,1168.2 L1252.7,1171.6 L1255.6,1188.7 L1258.4,1189.3 L1262.9,1189.8 L1266.0,1194.9 L1268.9,1177.1 L1272.7,1162.2 L1274.4,1160.9 L1275.6,1144.9 L1277.8,1136.0 L1280.0,1132.7 L1282.9,1132.2 L1285.1,1128.2 L1287.3,1126.4 L1288.9,1124.9 L1290.0,1128.2 L1291.1,1126.7 L1292.4,1128.2 L1295.6,1124.9 L1298.2,1122.7 L1299.6,1118.9 L1300.7,1118.7 L1302.2,1114.9 L1303.6,1114.9 L1304.4,1120.0 L1306.0,1127.8 L1307.3,1118.7 L1309.1,1114.4 L1311.1,1121.6 L1313.3,1133.8 L1315.6,1147.1 L1318.0,1159.3 L1320.7,1156.7 L1323.3,1153.8 L1325.1,1122.7 L1326.7,1111.6 L1328.9,1109.8 L1331.1,1110.0 L1333.3,1111.6 L1335.6,1112.7 L1337.3,1104.9 L1339.3,1096.0 L1342.2,1102.7 L1345.1,1111.6 L1347.8,1126.0 L1350.7,1146.0 L1353.3,1158.2 L1356.0,1168.9 L1359.3,1168.9 L1362.2,1170.4 L1364.4,1172.0 L1367.8,1162.7 L1371.1,1153.8 L1373.8,1150.0 L1376.0,1148.7 L1378.2,1147.8 L1381.6,1142.7 L1385.1,1136.4 L1388.9,1136.4 L1394.4,1136.4 L1397.8,1133.3 L1401.1,1128.2 L1404.0,1126.7 L1407.3,1120.4 L1410.0,1114.9 L1413.3,1117.1 L1416.7,1119.8 L1420.0,1116.7 L1422.9,1118.2 L1424.4,1133.8 L1426.0,1141.6 L1427.8,1157.1 L1430.0,1164.2 L1432.2,1173.3 L1434.4,1176.0 L1437.1,1176.0 L1438.9,1171.1 L1440.0,1161.6 L1441.1,1154.9 L1442.7,1152.0 L1444.9,1162.7 L1447.3,1176.0 L1450.0,1177.6 L1452.9,1171.6 L1455.6,1171.1 L1457.8,1168.7 L1460.4,1162.7 L1462.7,1157.6 L1465.1,1159.3 L1467.1,1161.6 L1469.6,1160.4 L1471.8,1158.9 L1474.0,1160.4 L1476.7,1168.7 L1478.9,1171.6 L1481.1,1172.7 L1484.4,1177.1 L1487.3,1177.1 L1490.0,1172.7 L1492.9,1167.1 L1495.6,1165.6 L1497.8,1166.0 L1499.3,1168.2 L1501.1,1152.2 L1503.3,1143.3 L1506.0,1149.3 L1508.2,1168.2 L1510.0,1163.8 L1512.2,1154.4 L1513.8,1148.9 L1516.0,1152.2 L1518.4,1154.9 L1520.7,1158.9 L1522.9,1166.0 L1525.1,1163.3 L1527.8,1162.7 L1530.0,1158.9 L1532.2,1156.0 L1533.3,1179.3 L1535.1,1158.2 L1536.7,1149.8 L1538.4,1144.9 L1540.4,1142.0 L1542.2,1147.1 L1544.4,1140.4 L1546.0,1151.1 L1547.8,1142.7 L1550.0,1142.7 L1552.2,1146.0 L1554.4,1154.4 L1556.2,1152.7 L1558.2,1159.3 L1560.4,1167.1 L1562.0,1169.3 L1564.0,1160.4 L1566.0,1160.0 L1567.8,1156.0 L1570.0,1158.2 L1572.2,1160.4 L1575.6,1160.4 L1578.4,1160.4 L1581.1,1157.8 L1584.0,1152.0 L1586.2,1152.0 L1589.3,1154.9 L1591.1,1163.1 L1593.3,1163.1 L1595.6,1156.7 L1597.8,1151.6 L1599.6,1147.6 L1601.6,1151.6 L1604.4,1152.2 L1606.7,1153.3 L1609.3,1151.1 L1611.8,1148.9 L1613.3,1153.1 L1614.9,1153.3 L1616.7,1145.6 L1619.6,1142.2 L1621.8,1146.0 L1624.0,1144.9 L1626.2,1154.4 L1628.4,1147.1 L1631.1,1144.2 L1633.3,1143.8 L1635.6,1142.2 L1637.8,1146.4 L1640.4,1149.3 L1642.7,1147.8 L1644.9,1150.4 L1647.3,1152.2 L1649.3,1154.9 L1650.7,1150.4 L1652.9,1154.9 L1655.1,1156.0 L1657.3,1154.4 L1659.6,1156.0 L1661.1,1154.4 L1663.3,1156.4 L1665.6,1152.7 L1667.1,1154.4 L1668.9,1148.2 L1671.1,1146.0 L1672.9,1156.4 L1674.4,1156.4 L1676.0,1164.2 L1678.2,1166.0 L1680.4,1169.3 L1683.3,1173.8 L1685.6,1178.9 L1687.8,1174.9 L1690.0,1161.6 L1691.6,1157.8 L1693.3,1157.1 L1695.1,1153.3 L1696.2,1173.8 L1697.3,1171.6 L1698.9,1161.6 L1700.4,1158.2 L1701.6,1157.8" fill="none" stroke="#cb2248" stroke-width="1.9" stroke-linejoin="round"/>
<text x="260.3" y="1253" font-size="16.6" fill="#bdbdbd">109</text>
<text x="260.3" y="1354" font-size="16.6" fill="#bdbdbd">0</text>
<path d="M311,1273.1 H1702" stroke="#f8bdfa" stroke-width="2" stroke-dasharray="6.5 3" fill="none"/>
<path d="M310.4,1312.2 L311.1,1292.7 L312.7,1269.3 L314.9,1267.1 L317.1,1267.1 L319.3,1266.0 L321.1,1267.1 L324.4,1265.6 L327.1,1264.2 L329.6,1259.3 L332.2,1262.7 L334.4,1266.4 L336.7,1264.9 L338.9,1261.6 L340.7,1261.6 L342.7,1266.0 L344.7,1280.4 L346.7,1254.9 L347.8,1254.9 L350.0,1263.8 L352.2,1263.8 L354.0,1262.7 L355.6,1273.8 L357.3,1268.2 L359.6,1321.6 L360.9,1256.0 L363.3,1256.0 L365.6,1312.0 L368.2,1260.4 L371.1,1261.6 L376.7,1261.6 L381.1,1260.4 L386.2,1258.2 L388.9,1260.4 L392.2,1262.7 L394.4,1254.9 L397.1,1257.8 L399.3,1261.6 L401.6,1261.6 L402.9,1253.1 L404.0,1253.1 L406.0,1267.1 L407.8,1270.0 L410.0,1257.1 L412.2,1261.1 L414.4,1263.8 L418.9,1257.1 L421.1,1265.6 L423.3,1261.6 L425.6,1262.7 L427.8,1305.3 L430.0,1261.6 L431.8,1262.7 L434.4,1264.9 L436.7,1264.9 L438.9,1262.7 L441.1,1261.6 L443.3,1263.8 L445.6,1262.7 L448.9,1258.2 L452.2,1256.0 L454.4,1263.1 L456.7,1263.1 L458.9,1260.0 L462.2,1260.0 L465.6,1262.2 L470.7,1267.1 L472.9,1261.6 L474.9,1262.7 L477.1,1260.4 L479.6,1268.2 L481.6,1266.0 L483.3,1265.3 L486.0,1258.2 L488.2,1256.0 L490.4,1264.2 L492.9,1263.8 L495.6,1258.2 L497.3,1262.7 L501.1,1260.4 L504.9,1258.7 L506.7,1267.8 L508.9,1260.4 L511.8,1257.1 L513.8,1260.4 L516.7,1253.8 L519.3,1257.1 L521.8,1267.1 L524.0,1263.8 L526.2,1264.9 L528.9,1261.1 L531.1,1266.4 L533.3,1265.3 L536.2,1264.9 L539.3,1260.4 L542.2,1264.2 L543.8,1266.4 L546.0,1264.2 L548.9,1262.7 L551.1,1262.7 L554.9,1261.6 L556.7,1266.4 L558.9,1259.8 L561.1,1259.8 L564.9,1260.4 L567.3,1253.8 L569.6,1258.2 L572.2,1254.9 L574.9,1264.2 L576.7,1259.8 L578.9,1263.8 L581.1,1260.4 L583.8,1264.2 L585.6,1264.9 L587.8,1264.2 L590.0,1258.2 L591.8,1266.0 L593.8,1261.6 L595.6,1270.4 L597.8,1262.7 L600.0,1264.9 L601.8,1304.2 L604.0,1310.4 L606.0,1303.1 L607.8,1266.4 L609.6,1260.4 L611.8,1267.1 L613.6,1272.0 L615.6,1260.4 L616.7,1254.9 L617.8,1254.9 L619.3,1266.0 L621.1,1329.3 L622.9,1266.4 L625.1,1266.0 L630.0,1261.6 L632.7,1261.6 L636.2,1264.9 L638.9,1263.8 L641.1,1261.6 L642.9,1261.6 L645.1,1264.9 L649.6,1264.9 L651.1,1263.8 L653.3,1266.4 L655.6,1264.9 L657.8,1264.9 L660.0,1263.8 L661.8,1259.8 L664.4,1259.8 L668.2,1264.9 L675.6,1264.9 L680.0,1261.6 L683.3,1265.6 L686.0,1267.8 L687.8,1287.6 L690.0,1266.0 L692.2,1267.6 L693.8,1273.8 L695.6,1270.4 L697.3,1264.2 L699.3,1271.6 L701.1,1266.0 L702.4,1274.2 L703.8,1263.3 L705.6,1283.8 L707.3,1285.3 L710.0,1269.3 L712.7,1261.1 L714.4,1268.9 L716.2,1328.2 L718.2,1268.7 L720.0,1264.2 L721.8,1265.6 L723.3,1268.7 L725.1,1268.9 L727.3,1264.9 L729.3,1266.0 L731.1,1264.9 L734.0,1266.0 L737.3,1266.0 L740.0,1263.8 L742.2,1263.8 L745.1,1262.2 L748.2,1262.7 L751.1,1260.9 L752.9,1260.9 L755.1,1258.9 L757.8,1261.6 L761.1,1263.1 L764.0,1264.9 L766.2,1268.2 L770.0,1263.8 L772.2,1290.4 L774.4,1267.6 L776.7,1264.9 L778.9,1262.7 L781.6,1264.2 L784.4,1266.0 L787.1,1263.3 L789.1,1261.1 L791.8,1267.1 L793.3,1267.8 L795.6,1280.9 L797.8,1264.9 L800.0,1264.9 L802.2,1263.8 L804.0,1264.9 L807.8,1276.7 L810.0,1269.3 L814.0,1268.9 L816.2,1267.6 L818.4,1266.0 L820.0,1266.0 L821.8,1292.7 L823.8,1296.0 L825.6,1267.1 L826.7,1268.2 L829.3,1266.0 L831.6,1263.3 L833.8,1266.4 L836.0,1264.9 L837.8,1261.1 L839.3,1266.0 L841.1,1266.0 L844.0,1264.2 L846.2,1263.8 L848.4,1262.7 L850.7,1263.8 L852.9,1263.8 L856.7,1267.8 L858.9,1267.1 L861.1,1267.1 L862.9,1309.8 L865.1,1267.1 L867.3,1340.9 L870.0,1267.6 L872.2,1266.0 L875.6,1267.8 L879.3,1267.8 L881.8,1267.1 L884.0,1266.0 L886.2,1266.7 L888.9,1265.6 L892.2,1263.1 L894.4,1263.1 L896.7,1264.9 L898.9,1264.9 L901.8,1263.3 L904.4,1262.7 L905.6,1262.7 L907.3,1252.7 L910.0,1262.2 L912.0,1287.6 L914.0,1266.4 L917.8,1264.4 L920.0,1260.9 L921.8,1262.0 L923.3,1261.6 L925.1,1255.3 L927.3,1264.2 L928.9,1265.6 L931.1,1268.9 L932.7,1292.7 L933.8,1350.4 L934.9,1283.3 L936.0,1348.2 L937.3,1270.4 L938.9,1269.3 L940.7,1350.4 L942.9,1264.9 L944.4,1350.9 L946.7,1351.6 L948.4,1251.6 L949.6,1251.6 L951.3,1308.7 L953.3,1252.7 L954.4,1252.7 L955.6,1273.8 L957.1,1272.7 L959.3,1260.4 L961.1,1260.9 L963.3,1264.2 L965.6,1258.7 L967.3,1259.8 L970.0,1254.9 L972.2,1258.7 L974.4,1259.8 L976.2,1350.4 L977.8,1262.2 L979.3,1268.2 L981.6,1267.1 L984.4,1261.1 L986.7,1262.7 L988.4,1262.7 L990.2,1342.2 L992.2,1278.2 L993.8,1264.9 L996.0,1261.6 L998.2,1257.8 L1001.1,1258.7 L1003.3,1264.9 L1005.6,1254.9 L1007.8,1257.1 L1010.0,1257.1 L1012.7,1261.6 L1015.6,1261.1 L1018.9,1259.3 L1021.1,1267.8 L1023.3,1257.1 L1025.1,1262.0 L1027.3,1259.3 L1029.6,1261.6 L1031.8,1261.6 L1034.4,1253.3 L1036.2,1259.3 L1038.4,1257.1 L1040.7,1257.1 L1042.9,1264.2 L1044.4,1260.0 L1046.7,1267.8 L1048.9,1261.6 L1052.9,1259.3 L1054.9,1338.9 L1057.1,1263.8 L1058.9,1263.8 L1060.0,1261.6 L1061.8,1257.8 L1065.6,1259.3 L1068.2,1260.4 L1070.4,1257.1 L1072.7,1261.6 L1074.4,1260.9 L1076.7,1261.6 L1078.2,1268.2 L1080.0,1348.2 L1082.2,1274.4 L1083.3,1294.9 L1084.7,1273.3 L1086.2,1303.3 L1088.0,1287.1 L1090.7,1331.6 L1092.7,1262.7 L1094.4,1265.6 L1096.2,1260.4 L1097.8,1264.9 L1099.6,1265.6 L1101.6,1260.0 L1103.3,1273.3 L1104.9,1261.6 L1106.7,1262.7 L1108.2,1346.7 L1111.8,1260.4 L1114.0,1266.0 L1116.7,1263.8 L1118.9,1267.1 L1121.1,1270.4 L1123.3,1266.7 L1126.0,1266.0 L1127.3,1264.4 L1128.9,1271.1 L1130.4,1266.0 L1131.8,1271.6 L1134.0,1264.9 L1135.6,1267.1 L1137.3,1286.0 L1138.9,1282.2 L1141.1,1270.4 L1142.9,1267.8 L1144.4,1269.8 L1146.2,1267.1 L1147.8,1266.0 L1149.3,1257.1 L1150.7,1260.4 L1152.2,1256.0 L1153.8,1261.6 L1154.9,1262.7 L1156.0,1288.7 L1158.2,1266.0 L1160.0,1261.6 L1162.2,1254.9 L1163.8,1261.6 L1166.7,1259.3 L1168.9,1264.9 L1170.4,1261.6 L1172.2,1262.2 L1173.3,1259.8 L1175.1,1260.4 L1176.2,1254.4 L1177.8,1261.6 L1181.1,1261.6 L1182.2,1262.7 L1183.8,1255.6 L1186.0,1257.8 L1187.3,1269.3 L1188.9,1267.1 L1191.1,1257.1 L1192.9,1253.1 L1194.4,1261.6 L1195.6,1279.8 L1197.1,1269.3 L1198.2,1273.8 L1200.7,1252.7 L1202.9,1263.3 L1205.6,1262.7 L1208.2,1272.7 L1209.6,1269.3 L1211.3,1279.3 L1213.3,1269.3 L1215.6,1251.6 L1217.8,1234.4 L1218.9,1234.4 L1221.1,1254.9 L1222.7,1258.9 L1224.0,1249.3 L1225.6,1281.6 L1227.1,1329.3 L1229.3,1295.6 L1231.6,1342.0 L1235.1,1326.7 L1238.2,1345.3 L1241.6,1258.2 L1244.0,1258.2 L1246.2,1263.8 L1248.2,1263.8 L1250.4,1269.3 L1252.7,1350.4 L1256.0,1284.9 L1259.6,1351.6 L1266.0,1351.6 L1267.1,1273.8 L1269.3,1252.7 L1271.8,1247.1 L1273.8,1267.1 L1274.9,1263.8 L1276.7,1273.8 L1278.9,1271.6 L1280.0,1270.0 L1281.6,1272.7 L1283.3,1267.1 L1284.9,1270.4 L1286.2,1269.3 L1287.8,1286.4 L1289.3,1271.6 L1291.6,1266.0 L1293.3,1260.4 L1294.9,1267.1 L1297.3,1260.9 L1299.3,1260.4 L1302.2,1272.7 L1303.6,1274.4 L1305.3,1321.6 L1306.2,1289.3 L1307.6,1287.8 L1308.9,1289.3 L1310.4,1318.9 L1311.8,1318.9 L1314.9,1337.8 L1317.8,1246.4 L1318.9,1246.4 L1321.1,1261.6 L1325.1,1252.0 L1327.3,1258.9 L1328.9,1256.7 L1330.4,1258.9 L1334.4,1247.1 L1335.6,1246.4 L1336.9,1242.7 L1338.2,1265.6 L1339.6,1250.4 L1341.1,1273.8 L1345.1,1344.9 L1348.2,1351.6 L1350.4,1351.6 L1353.3,1306.0 L1356.2,1320.4 L1359.1,1294.4 L1362.0,1347.1 L1364.9,1263.8 L1367.8,1253.3 L1368.4,1252.7 L1371.8,1302.2 L1374.9,1252.0 L1378.2,1252.0 L1381.8,1247.6 L1385.6,1254.9 L1388.4,1255.3 L1391.6,1284.9 L1394.7,1257.6 L1397.8,1254.9 L1401.1,1256.0 L1404.0,1257.1 L1406.7,1278.7 L1409.6,1262.7 L1413.3,1254.9 L1416.7,1251.6 L1420.0,1250.4 L1422.2,1350.4 L1423.8,1289.3 L1425.6,1332.7 L1428.0,1350.4 L1430.0,1278.2 L1432.7,1350.4 L1434.7,1266.7 L1437.1,1315.6 L1438.9,1261.1 L1440.9,1322.0 L1442.7,1330.4 L1444.9,1350.4 L1447.8,1277.1 L1450.4,1263.3 L1452.9,1321.6 L1455.1,1262.7 L1460.0,1262.7 L1462.2,1268.2 L1464.0,1260.4 L1467.1,1258.2 L1469.6,1264.2 L1472.2,1267.6 L1474.0,1266.0 L1476.2,1303.3 L1479.3,1262.0 L1481.6,1344.2 L1484.4,1260.4 L1487.3,1262.7 L1490.0,1262.7 L1494.4,1265.6 L1497.1,1312.0 L1501.1,1263.8 L1504.0,1260.4 L1506.2,1350.4 L1508.4,1261.6 L1511.6,1253.8 L1514.0,1262.2 L1516.7,1262.7 L1518.9,1266.7 L1521.1,1264.9 L1523.3,1260.4 L1525.6,1263.1 L1527.8,1262.2 L1530.4,1262.7 L1532.2,1288.2 L1534.0,1266.0 L1536.2,1262.0 L1538.2,1260.4 L1540.2,1331.6 L1542.2,1311.1 L1544.4,1350.4 L1546.7,1281.6 L1548.4,1273.8 L1551.1,1269.3 L1553.3,1265.6 L1554.9,1264.9 L1556.7,1268.7 L1558.2,1332.7 L1560.4,1263.3 L1561.8,1281.6 L1563.3,1264.2 L1564.9,1267.1 L1567.8,1268.2 L1569.6,1275.3 L1571.8,1267.1 L1573.8,1268.2 L1576.0,1268.2 L1578.2,1268.9 L1580.0,1268.9 L1581.8,1285.6 L1583.8,1271.6 L1584.9,1275.3 L1587.8,1271.6 L1591.1,1267.1 L1593.3,1317.6 L1595.6,1267.1 L1597.8,1268.2 L1600.0,1266.0 L1603.3,1267.1 L1606.2,1267.6 L1607.8,1267.6 L1610.0,1265.6 L1611.6,1349.3 L1613.3,1352.2 L1615.1,1284.9 L1617.3,1270.4 L1620.0,1269.3 L1622.2,1268.7 L1623.8,1350.4 L1626.0,1261.6 L1628.4,1266.7 L1630.7,1264.9 L1632.9,1266.7 L1635.6,1262.2 L1637.8,1263.1 L1640.0,1260.9 L1642.2,1259.3 L1644.2,1298.9 L1646.7,1264.9 L1648.2,1259.3 L1649.1,1259.3 L1650.7,1288.2 L1652.9,1262.7 L1655.1,1262.7 L1657.3,1261.6 L1659.6,1263.8 L1662.2,1266.0 L1663.8,1266.7 L1665.6,1306.7 L1667.3,1278.2 L1668.9,1284.9 L1670.7,1272.7 L1672.7,1271.6 L1674.2,1290.4 L1676.0,1270.4 L1677.8,1271.6 L1680.0,1266.0 L1681.8,1274.9 L1684.0,1273.8 L1685.6,1269.3 L1687.8,1269.3 L1689.6,1262.0 L1690.4,1262.7 L1692.2,1273.8 L1695.3,1351.6 L1697.1,1351.6 L1699.6,1284.9 L1701.6,1300.4" fill="none" stroke="#ea34f1" stroke-width="1.9" stroke-linejoin="round"/>
<text x="260.3" y="1393" font-size="16.6" fill="#bdbdbd">32</text>
<text x="260.3" y="1494" font-size="16.6" fill="#bdbdbd">23</text>
<path d="M311,1433.0 H1702" stroke="#e8e5cf" stroke-width="2" stroke-dasharray="6.5 3" fill="none"/>
<path d="M310.3,1476.3 L327.3,1476.3 L329.3,1489.3 L340.7,1489.3 L342.7,1476.3 L385.3,1476.3 L387.3,1463.7 L445.0,1463.7 L447.3,1451.0 L481.7,1451.0 L484.0,1463.7 L488.3,1463.7 L490.3,1451.0 L500.0,1451.0 L502.7,1463.7 L506.7,1463.7 L508.7,1451.0 L543.3,1451.0 L545.7,1463.7 L551.7,1463.7 L554.0,1476.3 L585.3,1476.3 L587.7,1463.7 L633.7,1463.7 L636.0,1451.0 L670.7,1451.0 L672.7,1438.0 L705.7,1438.0 L707.3,1425.7 L729.3,1425.7 L731.3,1412.7 L735.7,1412.7 L737.7,1425.7 L821.7,1425.7 L823.7,1412.7 L837.7,1412.7 L840.0,1425.7 L852.7,1425.7 L855.0,1412.7 L866.7,1412.7 L867.0,1412.7 L880.0,1412.7 L882.3,1425.7 L933.3,1425.7 L935.3,1412.7 L946.7,1412.7 L947.7,1400.0 L962.7,1400.0 L965.3,1412.7 L979.3,1412.7 L982.0,1400.0 L1034.0,1400.0 L1036.7,1412.7 L1042.0,1412.7 L1044.3,1400.0 L1083.3,1400.0 L1084.7,1387.3 L1085.7,1387.3 L1086.3,1374.3 L1088.3,1374.3 L1090.7,1387.3 L1107.0,1387.3 L1108.3,1399.3 L1110.0,1387.3 L1155.7,1387.3 L1157.3,1400.0 L1159.0,1400.0 L1160.7,1412.7 L1164.0,1412.7 L1166.0,1425.7 L1168.0,1425.7 L1169.7,1438.0 L1172.7,1438.0 L1175.0,1451.0 L1195.0,1451.0 L1196.7,1438.0 L1223.3,1438.0 L1225.3,1451.0 L1227.3,1451.0 L1229.3,1438.0 L1263.3,1438.0 L1266.0,1451.0 L1277.7,1451.0 L1279.3,1438.0 L1280.7,1425.7 L1282.3,1425.7 L1284.0,1412.7 L1289.3,1412.7 L1291.0,1425.7 L1294.3,1425.7 L1296.3,1438.0 L1307.0,1438.0 L1308.3,1425.7 L1335.7,1425.7 L1337.3,1438.0 L1339.3,1438.0 L1341.0,1451.0 L1353.3,1451.0 L1356.0,1463.7 L1375.0,1463.7 L1378.3,1476.3 L1397.3,1476.3 L1401.0,1463.7 L1426.7,1463.7 L1430.0,1463.7 L1432.7,1451.0 L1484.3,1451.0 L1487.3,1438.0 L1532.0,1438.0 L1533.7,1425.7 L1548.7,1425.7 L1550.7,1412.7 L1566.0,1412.7 L1568.0,1400.0 L1575.7,1400.0 L1578.0,1412.7 L1635.0,1412.7 L1637.7,1425.7 L1644.0,1425.7 L1646.7,1438.0 L1659.0,1438.0 L1661.7,1425.7 L1701.0,1425.7" fill="none" stroke="#b4ac6c" stroke-width="1.9" stroke-linejoin="round"/>
</svg>
</body></html>
